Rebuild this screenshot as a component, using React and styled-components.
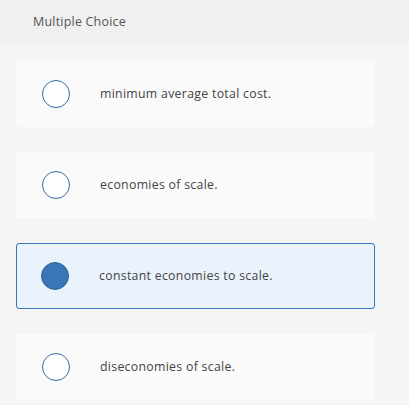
import React, { useState } from 'react';
import styled, { createGlobalStyle } from 'styled-components';

const GlobalStyle = createGlobalStyle`
  html, body {
    margin: 0;
    padding: 0;
    background: #f5f5f5;
  }
  body {
    font-family: "Open Sans", "Liberation Sans", sans-serif;
    color: #333;
  }
`;

const Header = styled.div`
  height: 44px;
  background: #f0f0f0;
  display: flex;
  align-items: center;
  padding-left: 33px;
  padding-bottom: 2px;
  box-sizing: border-box;
  font-size: 12.5px;
  letter-spacing: 0.2px;
  color: #555;
`;

const List = styled.div`
  display: flex;
  flex-direction: column;
  gap: 25px;
  padding: 17px 34px 0 16px;
`;

const Option = styled.label`
  box-sizing: border-box;
  height: 66px;
  display: flex;
  align-items: center;
  padding-left: 25px;
  border-radius: 3px;
  cursor: pointer;
  background: ${({ $selected }) => ($selected ? '#eaf2fc' : '#fafafa')};
  border: 1px solid ${({ $selected }) => ($selected ? '#3877c4' : 'transparent')};
`;

const Radio = styled.span`
  box-sizing: border-box;
  width: 28px;
  height: 28px;
  border-radius: 50%;
  flex: none;
  margin-left: ${({ $selected }) => ($selected ? '-1px' : '0')};
  border: 1.5px solid ${({ $selected }) => ($selected ? '#2e659f' : '#346aa3')};
  background: ${({ $selected }) => ($selected ? '#3a75b8' : '#fff')};
`;

const Text = styled.span`
  margin-left: 30px;
  margin-top: -2px;
  font-size: 12.3px;
  letter-spacing: 0.3px;
  color: #444;
`;

const choices = [
  'minimum average total cost.',
  'economies of scale.',
  'constant economies to scale.',
  'diseconomies of scale.',
];

export default function App() {
  const [picked, setPicked] = useState(2);
  return (
    <>
      <GlobalStyle />
      <Header>Multiple Choice</Header>
      <List>
        {choices.map((c, i) => (
          <Option key={c} $selected={picked === i} onClick={() => setPicked(i)}>
            <Radio $selected={picked === i} />
            <Text>{c}</Text>
          </Option>
        ))}
      </List>
    </>
  );
}
